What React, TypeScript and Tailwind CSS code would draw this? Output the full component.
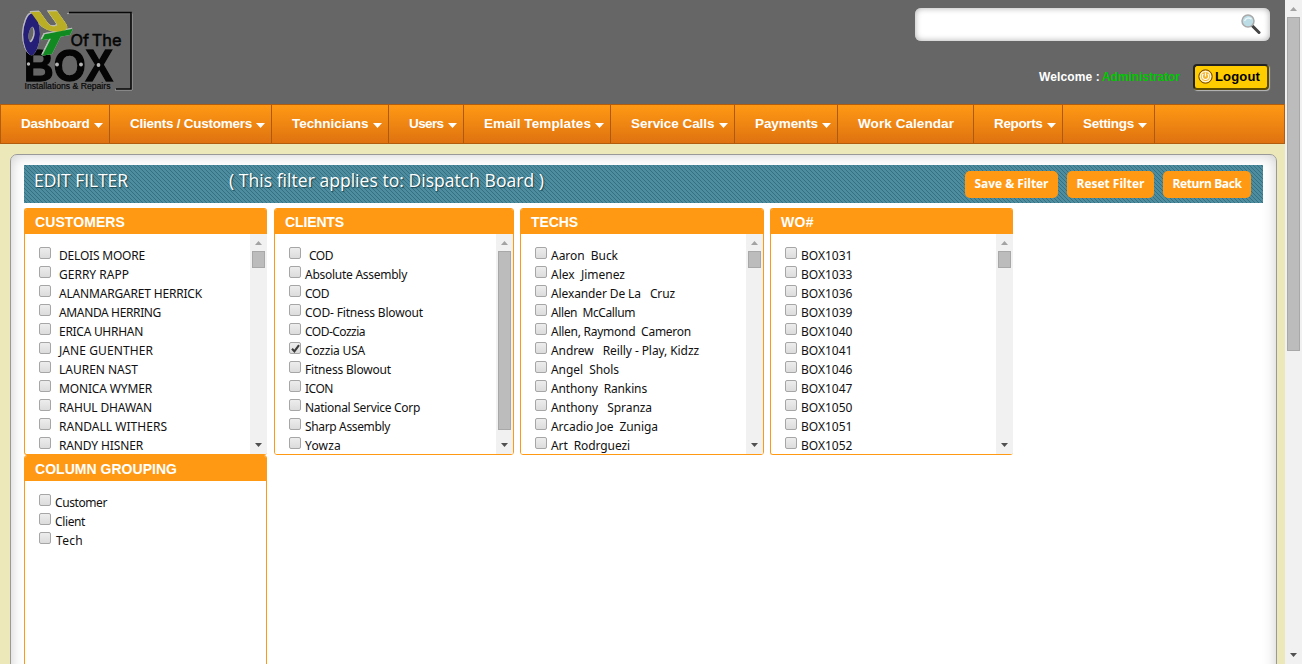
import { useLayoutEffect, useRef, type ReactNode } from "react";

type Row = { text: string; width: number; indent?: number; checked?: boolean };

/** A single line of text whose tracking is adjusted so that it fills `width` pixels. */
function Fit({ width, className = "", children }: { width: number; className?: string; children: ReactNode }) {
  const ref = useRef<HTMLSpanElement>(null);
  useLayoutEffect(() => {
    const el = ref.current;
    if (!el) return;
    el.style.letterSpacing = "0px";
    const n = (el.textContent ?? "").length;
    const natural = el.getBoundingClientRect().width;
    if (n > 1) el.style.letterSpacing = `${(width - natural) / n}px`;
  }, [width]);
  return (
    <span ref={ref} className={`inline-block shrink-0 whitespace-pre ${className}`}>
      {children}
    </span>
  );
}

const customers: Row[] = [
  { text: "DELOIS MOORE", width: 86 },
  { text: "GERRY RAPP", width: 70 },
  { text: "ALANMARGARET HERRICK", width: 143 },
  { text: "AMANDA HERRING", width: 102 },
  { text: "ERICA UHRHAN", width: 84 },
  { text: "JANE GUENTHER", width: 94 },
  { text: "LAUREN NAST", width: 79 },
  { text: "MONICA WYMER", width: 93 },
  { text: "RAHUL DHAWAN", width: 93 },
  { text: "RANDALL WITHERS", width: 108 },
  { text: "RANDY HISNER", width: 84 },
];

const clients: Row[] = [
  { text: "COD", width: 24, indent: 4 },
  { text: "Absolute Assembly", width: 102 },
  { text: "COD", width: 24 },
  { text: "COD- Fitness Blowout", width: 118 },
  { text: "COD-Cozzia", width: 60 },
  { text: "Cozzia USA", width: 60, checked: true },
  { text: "Fitness Blowout", width: 86 },
  { text: "ICON", width: 28 },
  { text: "National Service Corp", width: 115 },
  { text: "Sharp Assembly", width: 85 },
  { text: "Yowza", width: 36 },
];

const techs: Row[] = [
  { text: "Aaron  Buck", width: 67 },
  { text: "Alex  Jimenez", width: 74 },
  { text: "Alexander De La   Cruz", width: 124 },
  { text: "Allen  McCallum", width: 84 },
  { text: "Allen, Raymond  Cameron", width: 140 },
  { text: "Andrew   Reilly - Play, Kidzz", width: 148 },
  { text: "Angel  Shols", width: 68 },
  { text: "Anthony  Rankins", width: 96 },
  { text: "Anthony   Spranza", width: 101 },
  { text: "Arcadio Joe  Zuniga", width: 107 },
  { text: "Art  Rodrguezi", width: 79 },
];

const orders: Row[] = [1031, 1033, 1036, 1039, 1040, 1041, 1046, 1047, 1050, 1051, 1052].map((n) => ({
  text: `BOX${n}`,
  width: 51.5,
}));

const grouping: Row[] = [
  { text: "Customer", width: 52 },
  { text: "Client", width: 30 },
  { text: "Tech", width: 27, indent: 1 },
];

function Logo() {
  return (
    <svg className="ml-5 mt-2 block h-[84px] w-[114px] shrink-0 overflow-visible" viewBox="20 8 114 84" fontFamily="'Liberation Sans', sans-serif">
      <g fill="none">
        <path d="M67 13.600H132V90H115" stroke="#aaa" strokeWidth="1" />
        <path d="M69 12.600H131V89H116" stroke="#080808" strokeWidth="1.600" />
      </g>
      <text
        x="70.500"
        y="45.500"
        fontFamily="Inter, 'Liberation Sans', sans-serif"
        fontSize="16"
        fill="#050505"
        stroke="#050505"
        strokeWidth=".5"
        wordSpacing="-2"
        textLength="51"
        lengthAdjust="spacingAndGlyphs"
      >
        Of The
      </text>
      <text
        className="[filter:drop-shadow(0.5px_0.5px_0px_#8a8a8a)]"
        x="24"
        y="80.500"
        fontSize="44"
        fontWeight="700"
        fill="#050505"
        stroke="#050505"
        strokeWidth="1.500"
        textLength="89"
        lengthAdjust="spacingAndGlyphs"
      >
        BOX
      </text>
      <g fill="#b5b5b5">
        <circle cx="28.500" cy="64" r="1.700" />
        <circle cx="57" cy="64.500" r="1.900" />
        <circle cx="81" cy="64.500" r="1.900" />
        <circle cx="98.500" cy="65" r="1.900" />
      </g>
      <text x="24.500" y="89" fontSize="8.500" fill="#070707" stroke="#070707" strokeWidth=".2" textLength="86" lengthAdjust="spacingAndGlyphs">
        Installations &amp; Repairs
      </text>
      <g
        className="[filter:drop-shadow(0.4px_0.4px_0.3px_#ddd)_drop-shadow(-0.4px_-0.4px_0.3px_#bbb)]"
        fontSize="100"
        fontWeight="700"
        strokeLinejoin="miter"
      >
        <text transform="matrix(.135 .34 -.14 .34 21.500 33)" fill="#261f78" stroke="#261f78" strokeWidth="14">O</text>
        <text transform="matrix(.38 -.01 .18 .25 43.500 30.500)" fill="#b9ae25" stroke="#b9ae25" strokeWidth="10">U</text>
        <text transform="matrix(.42 -.08 -.15 .3 35 56)" fill="#118a22" stroke="#118a22" strokeWidth="9">T</text>
      </g>
    </svg>
  );
}

function Magnifier() {
  return (
    <svg className="h-5 w-5" viewBox="0 0 20 20">
      <path d="M11.500 12L18 18.500" stroke="#454545" strokeWidth="3" strokeLinecap="round" />
      <circle cx="7" cy="7" r="6" fill="#bcdce6" stroke="#a9a9a9" strokeWidth="1.500" />
      <path d="M3.500 7C5 3.500 8 3.500 10.500 5" stroke="#e9f6fa" strokeWidth="1.500" fill="none" />
    </svg>
  );
}

function Header() {
  return (
    <header className="flex h-[104px] shrink-0 justify-between bg-[#666] pr-[15px]">
      <Logo />
      <div className="flex flex-col items-end pt-2">
        <div className="flex h-[33px] w-[355px] items-center justify-end rounded-[6px] bg-white pb-[2px] pr-[9px] shadow-[inset_0_0_6px_#aaa]">
          <Magnifier />
        </div>
        <div className="mr-px mt-[23px] flex items-center text-[12px] font-bold leading-[15px]">
          <Fit width={61} className="mr-[2px] text-white">Welcome :</Fit>
          <Fit width={78} className="mr-[13px] text-[#00c800]">Administrator</Fit>
          <div className="flex h-[26px] w-[76px] items-center rounded-[4px] border-2 border-[#222] border-b-[#5c4b00] border-r-[#5c4b00] bg-[#fc0] pb-px pl-[3px] text-[13px] text-black shadow-[1px_1px_1px_#bbb]">
            <svg className="mr-[2px] h-[15px] w-[15px] shrink-0" viewBox="0 0 15 15" fill="none">
              <circle cx="7.500" cy="7.500" r="6.700" fill="#f6b62c" stroke="#6c4600" />
              <circle cx="7.500" cy="7.500" r="5.200" stroke="#fff4d5" strokeWidth="1.300" />
              <path d="M7.500 3.500V7.500M5.300 5A3.200 3.200 0 1 0 9.700 5" stroke="#fff" strokeWidth="1.200" />
            </svg>
            <Fit width={45}>Logout</Fit>
          </div>
        </div>
      </div>
    </header>
  );
}

function NavItem({ label, width, box, arrow = true }: { label: string; width: number; box: string; arrow?: boolean }) {
  return (
    <div className={`flex h-full shrink-0 items-center border-r border-[#ab5a0e] pl-5 ${box}`}>
      <Fit width={width}>{label}</Fit>
      {arrow && (
        <svg className="ml-1 mt-[3px] h-[5px] w-[9px]" viewBox="0 0 9 5">
          <path d="M0 0H9L4.500 5Z" fill="#fff" />
        </svg>
      )}
    </div>
  );
}

function Nav() {
  return (
    <nav className="flex h-10 shrink-0 items-center border border-[#b25d0d] bg-linear-to-b from-[#ff9914] to-[#df7210] text-[13.5px] font-bold text-white">
      <NavItem label="Dashboard" width={68.5} box="w-[109px]" />
      <NavItem label="Clients / Customers" width={122} box="w-[162px]" />
      <NavItem label="Technicians" width={76.5} box="w-[117px]" />
      <NavItem label="Users" width={34.5} box="w-[75px]" />
      <NavItem label="Email Templates" width={107} box="w-[147px]" />
      <NavItem label="Service Calls" width={83.5} box="w-[124px]" />
      <NavItem label="Payments" width={63} box="w-[103px]" />
      <NavItem label="Work Calendar" width={96} box="w-[136px]" arrow={false} />
      <NavItem label="Reports" width={48.5} box="w-[89px]" />
      <NavItem label="Settings" width={51} box="w-[92px]" />
    </nav>
  );
}

function Checkbox({ checked }: { checked?: boolean }) {
  return (
    <span className="flex h-3 w-3 shrink-0 items-center justify-center rounded-[2px] border border-[#a6a6a6] bg-linear-to-b from-[#ededed] to-[#dcdcdc]">
      {checked && (
        <svg className="h-[9px] w-[9px] shrink-0" viewBox="0 0 9 9" fill="none">
          <path d="M1 4.800L3.400 7.300L8 1.200" stroke="#3c3c3c" strokeWidth="2.100" />
        </svg>
      )}
    </span>
  );
}

function ScrollTrack({ thumb }: { thumb: string }) {
  return (
    <div className="flex w-[17px] shrink-0 flex-col items-center bg-[#f1f1f1]">
      <svg className="mt-[7px] h-1 w-[7px] shrink-0" viewBox="0 0 7 4">
        <path d="M0 4H7L3.500 0Z" fill="#a3a3a3" />
      </svg>
      <div className={`mt-[6px] w-[13px] shrink-0 border border-[#a8a8a8] bg-[#bcbcbc] ${thumb}`} />
      <svg className="mb-[7px] mt-auto h-1 w-[7px] shrink-0" viewBox="0 0 7 4">
        <path d="M0 0H7L3.500 4Z" fill="#505050" />
      </svg>
    </div>
  );
}

type PanelProps = {
  title: string;
  titleWidth: number;
  rows: Row[];
  box: string;
  body?: string;
  gap?: string;
  thumb?: string;
};

function Panel({ title, titleWidth, rows, box, body = "h-[220px]", gap = "gap-1", thumb }: PanelProps) {
  return (
    <section className={`flex shrink-0 flex-col overflow-hidden rounded-[3px] border border-[#ff9913] ${box}`}>
      <h2 className="flex h-[25px] shrink-0 items-center bg-[#ff9913] pl-[10px] text-[14px] font-bold leading-4 text-white">
        <Fit width={titleWidth}>{title}</Fit>
      </h2>
      <div className={`flex overflow-hidden bg-white ${body}`}>
        <ul className="min-w-0 flex-1 pl-[14px] pt-3">
          {rows.map((row, i) => (
            <li key={i} className={`flex h-[19px] items-start pt-px ${gap}`}>
              <Checkbox checked={row.checked} />
              <span className="mt-px flex font-['Noto_Sans',sans-serif] text-[12px] leading-4 text-[#111]">
                {row.indent ? <span className={row.indent === 4 ? "w-1" : "w-px"} /> : null}
                <Fit width={row.width}>{row.text}</Fit>
              </span>
            </li>
          ))}
        </ul>
        {thumb && <ScrollTrack thumb={thumb} />}
      </div>
    </section>
  );
}

function ActionButton({ label, width, box }: { label: string; width: number; box: string }) {
  return (
    <button className={`flex h-[27px] items-center justify-center rounded-[5px] bg-[#ff9913] pb-px text-[12px] font-bold text-white ${box}`}>
      <Fit width={width}>{label}</Fit>
    </button>
  );
}

function TitleBar() {
  return (
    <div className="flex h-[38px] justify-between bg-[linear-gradient(45deg,#34707f_0%,#34707f_16%,#4d8d9f_16%,#4d8d9f_50%,#34707f_50%,#34707f_66%,#4d8d9f_66%)] bg-[length:4px_4px] pl-[10px] pr-3 pt-[6px] font-['Open_Sans',sans-serif] text-white">
      <div className="-mt-px flex h-5 items-center text-[17.5px] leading-5 [text-shadow:1px_1px_1px_#1d4550]">
        <Fit width={94} className="mr-[101px]">EDIT FILTER</Fit>
        <Fit width={315}>( This filter applies to: Dispatch Board )</Fit>
      </div>
      <div className="flex gap-[9px]">
        <ActionButton label="Save &amp; Filter" width={74} box="w-[93px]" />
        <ActionButton label="Reset Filter" width={68} box="w-[87px]" />
        <ActionButton label="Return Back" width={69} box="w-[88px]" />
      </div>
    </div>
  );
}

export default function App() {
  return (
    <div className="flex h-[664px] w-[1302px] overflow-hidden font-['Liberation_Sans',Arial,sans-serif]">
      <div className="flex min-w-0 flex-1 flex-col overflow-hidden bg-[#ede8b9]">
        <Header />
        <Nav />
        <main className="ml-[10px] mr-2 mt-[10px] h-[600px] shrink-0 rounded-[7px] border border-[#999] bg-white px-[13px] pt-[10px] shadow-[inset_0_0_14px_#ccc]">
          <TitleBar />
          <div className="mt-[5px] flex">
            <Panel title="CUSTOMERS" titleWidth={90} rows={customers} box="mr-[7px] w-[243px] border-r-0" gap="gap-2" thumb="h-[17px]" />
            <Panel title="CLIENTS" titleWidth={59} rows={clients} box="mr-[6px] w-[240px]" thumb="h-[179px]" />
            <Panel title="TECHS" titleWidth={47} rows={techs} box="mr-[6px] w-[244px]" thumb="h-[17px]" />
            <Panel title="WO#" titleWidth={33} rows={orders} box="w-[243px] border-r-0" thumb="h-[17px]" />
          </div>
          <Panel title="COLUMN GROUPING" titleWidth={142} rows={grouping} box="w-[243px]" body="h-[300px]" />
        </main>
      </div>
      <ScrollTrack thumb="h-[334px]" />
    </div>
  );
}
